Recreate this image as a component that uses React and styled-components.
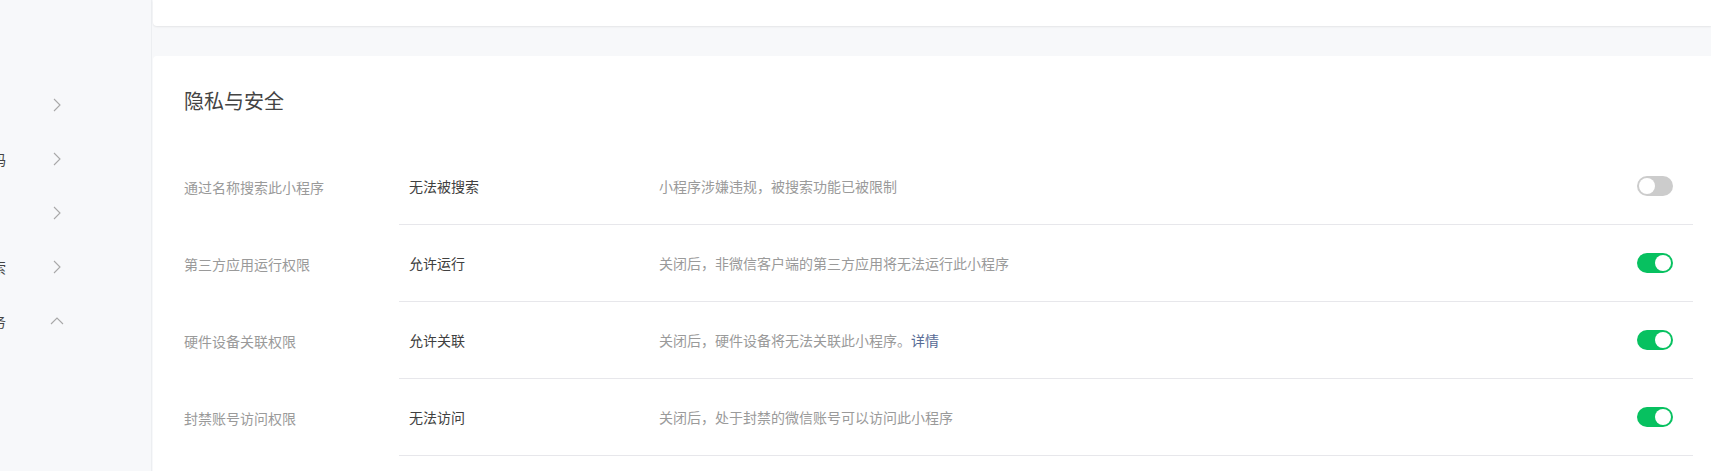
import React from 'react';
import styled, { createGlobalStyle } from 'styled-components';

const GlobalStyle = createGlobalStyle`
  html, body {
    margin: 0;
    padding: 0;
    background: #f7f8fa;
    font-family: "Noto Sans CJK SC", "Noto Sans", sans-serif;
  }
`;

const Page = styled.div`
  display: flex;
  width: 1711px;
  height: 471px;
  overflow: hidden;
  background: #f7f8fa;
`;

const Sidebar = styled.div`
  width: 152px;
  flex-shrink: 0;
  box-sizing: border-box;
  border-right: 1px solid #eceef1;
  padding-top: 78px;
  overflow: hidden;
`;

const SideItem = styled.div`
  display: flex;
  align-items: center;
  height: 54px;
`;

const SideLabel = styled.div`
  width: 6px;
  flex-shrink: 0;
  display: flex;
  justify-content: flex-end;
  white-space: nowrap;
  font-size: 14px;
  color: #444;
`;

const Chevron = styled.svg`
  margin-left: ${props => (props.$up ? '44px' : '47px')};
  flex-shrink: 0;
`;

const Main = styled.div`
  flex: 1;
  display: flex;
  flex-direction: column;
  gap: 30px;
  padding-left: 1px;
  min-width: 0;
`;

const TopCard = styled.div`
  height: 26px;
  flex-shrink: 0;
  background: #fff;
  border-radius: 0 0 0 4px;
  box-shadow: 0 1px 2px rgba(0, 0, 0, 0.08);
`;

const Card = styled.div`
  flex: 1;
  background: #fff;
  border-radius: 4px 0 0 0;
  padding: 31px 18px 0 31px;
`;

const Title = styled.h2`
  margin: 0 0 33px;
  font-size: 20px;
  line-height: 28px;
  font-weight: 400;
  color: #444;
`;

const Row = styled.div`
  display: flex;
  height: 77px;
  font-size: 14px;
  line-height: 20px;
`;

const Label = styled.div`
  width: 215px;
  flex-shrink: 0;
  display: flex;
  align-items: center;
  color: #9a9a9a;
`;

const RowBody = styled.div`
  flex: 1;
  display: flex;
  align-items: center;
  border-bottom: 1px solid #e7e7eb;
  padding: 0 20px 0 10px;
`;

const Value = styled.div`
  width: 250px;
  flex-shrink: 0;
  color: #404040;
`;

const Desc = styled.div`
  flex: 1;
  color: #9a9a9a;
`;

const Link = styled.a`
  color: #576b95;
  text-decoration: none;
`;

const Switch = styled.div`
  width: 36px;
  height: 20px;
  border-radius: 10px;
  box-sizing: border-box;
  padding: 2px;
  display: flex;
  justify-content: ${props => (props.$on ? 'flex-end' : 'flex-start')};
  background: ${props => (props.$on ? '#07c160' : '#cccccc')};
  flex-shrink: 0;
`;

const Knob = styled.div`
  width: 16px;
  height: 16px;
  border-radius: 50%;
  background: #fff;
`;

const sideItems = [
  { text: '', up: false },
  { text: '二维码', up: false },
  { text: '', up: false },
  { text: '搜索', up: false },
  { text: '服务', up: true },
];

const rows = [
  { label: '通过名称搜索此小程序', value: '无法被搜索', desc: '小程序涉嫌违规，被搜索功能已被限制', on: false },
  { label: '第三方应用运行权限', value: '允许运行', desc: '关闭后，非微信客户端的第三方应用将无法运行此小程序', on: true },
  { label: '硬件设备关联权限', value: '允许关联', desc: '关闭后，硬件设备将无法关联此小程序。', link: '详情', on: true },
  { label: '封禁账号访问权限', value: '无法访问', desc: '关闭后，处于封禁的微信账号可以访问此小程序', on: true },
];

export default function App() {
  return (
    <Page>
      <GlobalStyle />
      <Sidebar>
        {sideItems.map((item, i) => (
          <SideItem key={i}>
            <SideLabel>{item.text}</SideLabel>
            {item.up ? (
              <Chevron $up width="14" height="8" viewBox="0 0 14 8">
                <polyline points="1,7 7,1 13,7" fill="none" stroke="#a8a8a8" strokeWidth="1.1" />
              </Chevron>
            ) : (
              <Chevron width="8" height="14" viewBox="0 0 8 14">
                <polyline points="1,1 7,7 1,13" fill="none" stroke="#a8a8a8" strokeWidth="1.1" />
              </Chevron>
            )}
          </SideItem>
        ))}
      </Sidebar>
      <Main>
        <TopCard />
        <Card>
          <Title>隐私与安全</Title>
          {rows.map((r, i) => (
            <Row key={i}>
              <Label>{r.label}</Label>
              <RowBody>
                <Value>{r.value}</Value>
                <Desc>
                  {r.desc}
                  {r.link && <Link href="#">{r.link}</Link>}
                </Desc>
                <Switch $on={r.on}>
                  <Knob />
                </Switch>
              </RowBody>
            </Row>
          ))}
        </Card>
      </Main>
    </Page>
  );
}
